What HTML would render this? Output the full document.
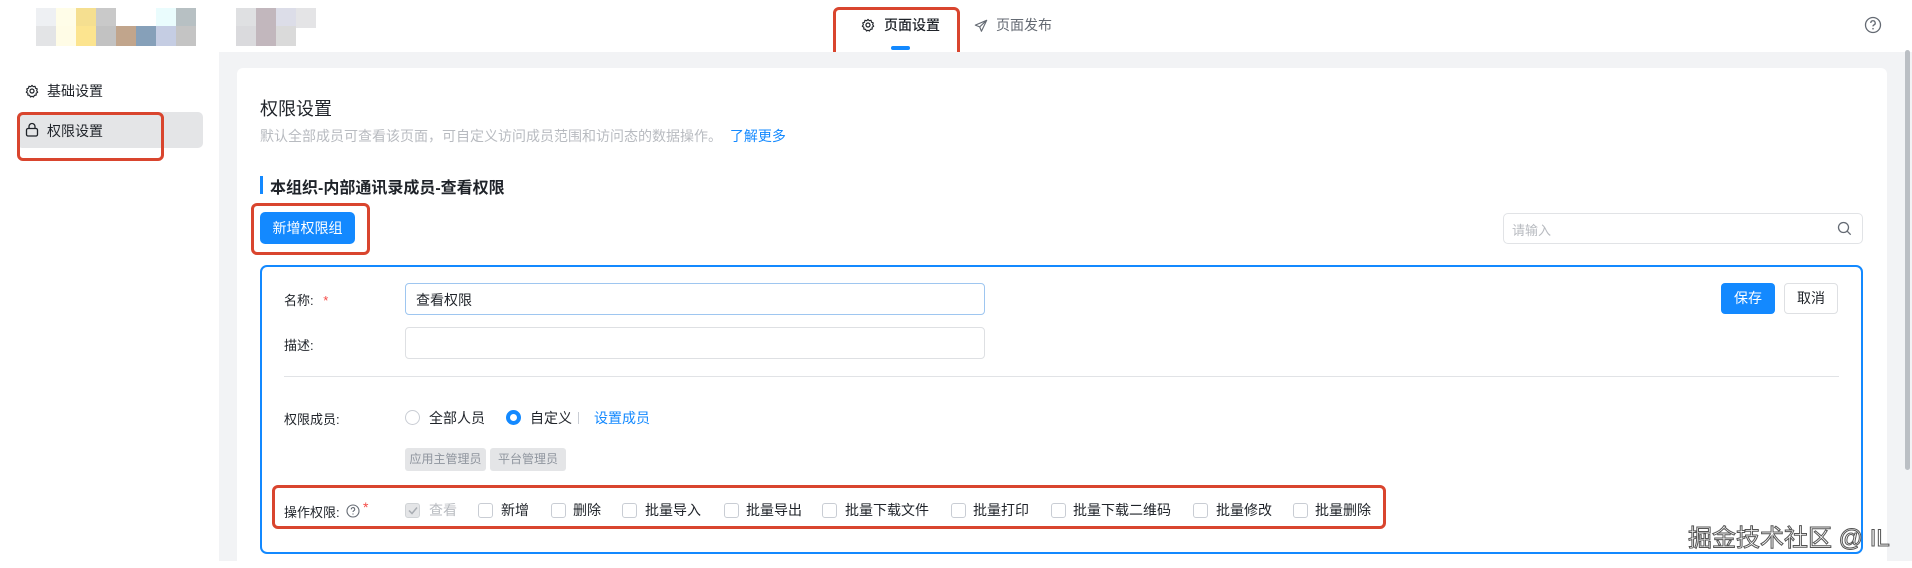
<!DOCTYPE html>
<html><head><meta charset="utf-8"><style>
*{margin:0;padding:0;box-sizing:border-box}
body{width:1912px;height:561px;overflow:hidden;background:#fff;font-family:"Liberation Sans","Noto Sans CJK SC",sans-serif;font-size:14px;color:#1f2329;position:relative}
.a{position:absolute}
.blk{position:absolute;width:20px;height:20px}
.red{position:absolute;border:3px solid #d9452e;border-radius:6px}
.cb{position:absolute;top:503px;width:15px;height:15px;border:1px solid #c9cdd4;border-radius:3px;background:#fff}
.cl{position:absolute;top:500px;font-size:14px;color:#1f2329;white-space:nowrap}
.lbl{position:absolute;left:284px;font-size:13px;color:#1f2329}
.inp{position:absolute;left:405px;width:580px;height:32px;border:1px solid #dee0e3;border-radius:4px;background:#fff}
</style></head><body>
<div class="blk" style="left:36px;top:8px;background:#eef0f3"></div>
<div class="blk" style="left:56px;top:8px;background:#fffde8"></div>
<div class="blk" style="left:76px;top:8px;background:#f5df90"></div>
<div class="blk" style="left:96px;top:8px;background:#c9c9c9"></div>
<div class="blk" style="left:156px;top:8px;background:#eafcfd"></div>
<div class="blk" style="left:176px;top:8px;background:#b7c0c3"></div>
<div class="blk" style="left:36px;top:26px;background:#e3e4e6"></div>
<div class="blk" style="left:56px;top:26px;background:#fffce6"></div>
<div class="blk" style="left:76px;top:26px;background:#fce48f"></div>
<div class="blk" style="left:96px;top:26px;background:#c2c2c2"></div>
<div class="blk" style="left:116px;top:26px;background:#c1a58c"></div>
<div class="blk" style="left:136px;top:26px;background:#86a0b9"></div>
<div class="blk" style="left:156px;top:26px;background:#c5cde3"></div>
<div class="blk" style="left:176px;top:26px;background:#c4c4c4"></div>
<div class="blk" style="left:236px;top:8px;background:#dfe0e2"></div>
<div class="blk" style="left:256px;top:8px;background:#c2b7bd"></div>
<div class="blk" style="left:276px;top:8px;background:#dcdde8"></div>
<div class="blk" style="left:296px;top:8px;background:#e4e4e6"></div>
<div class="blk" style="left:236px;top:26px;background:#dadadd"></div>
<div class="blk" style="left:256px;top:26px;background:#c2b7bd"></div>
<div class="blk" style="left:276px;top:26px;background:#dadada"></div>

<svg class="a" style="left:861px;top:18px" width="14" height="14" viewBox="0 0 16 16"><circle cx="8" cy="8" r="2.3" fill="none" stroke="#1f2329" stroke-width="1.4"/><path d="M8 1.5l1.4 1.6 2.1-.4.5 2.1 2 .8-.7 2 1.2 1.8-1.8 1.2.1 2.1-2.1.3-1 1.9L8 14l-1.7.9-1-1.9-2.1-.3.1-2.1L1.5 9.4l1.2-1.8-.7-2 2-.8.5-2.1 2.1.4z" fill="none" stroke="#1f2329" stroke-width="1.3" stroke-linejoin="round"/></svg>
<div class="a" style="left:884px;top:15px;font-size:14px;font-weight:500">页面设置</div>
<div class="a" style="left:891px;top:46px;width:19px;height:4px;border-radius:2px;background:#1389ff"></div>
<svg class="a" style="left:974px;top:19px" width="14" height="14" viewBox="0 0 16 16"><path d="M14.5 1.5L1.5 7l5 2 2 5z M6.5 9l8-7.5" fill="none" stroke="#646a73" stroke-width="1.3" stroke-linejoin="round"/></svg>
<div class="a" style="left:996px;top:15px;font-size:14px;color:#646a73">页面发布</div>
<svg class="a" style="left:1864px;top:16px" width="18" height="18" viewBox="0 0 18 18"><circle cx="9" cy="9" r="7.5" fill="none" stroke="#646a73" stroke-width="1.3"/><path d="M6.8 7a2.2 2.2 0 1 1 3 2c-.6.3-.8.7-.8 1.4" fill="none" stroke="#646a73" stroke-width="1.3"/><circle cx="9" cy="12.7" r=".8" fill="#646a73"/></svg>
<div class="red" style="left:833px;top:7px;width:127px;height:61px"></div>

<div class="a" style="left:219px;top:52px;width:1693px;height:509px;background:#f2f3f5"></div>
<div class="a" style="left:1905px;top:50px;width:5px;height:420px;background:#bbbfc4;border-radius:3px"></div>
<div class="a" style="left:237px;top:68px;width:1650px;height:500px;background:#fff;border-radius:6px"></div>

<svg class="a" style="left:25px;top:84px" width="14" height="14" viewBox="0 0 16 16"><circle cx="8" cy="8" r="2.3" fill="none" stroke="#1f2329" stroke-width="1.4"/><path d="M8 1.5l1.4 1.6 2.1-.4.5 2.1 2 .8-.7 2 1.2 1.8-1.8 1.2.1 2.1-2.1.3-1 1.9L8 14l-1.7.9-1-1.9-2.1-.3.1-2.1L1.5 9.4l1.2-1.8-.7-2 2-.8.5-2.1 2.1.4z" fill="none" stroke="#1f2329" stroke-width="1.3" stroke-linejoin="round"/></svg>
<div class="a" style="left:47px;top:81px;font-size:14px">基础设置</div>
<div class="a" style="left:17px;top:112px;width:186px;height:36px;background:#e4e5e7;border-radius:5px"></div>
<svg class="a" style="left:25px;top:122px" width="14" height="15" viewBox="0 0 14 15"><rect x="1.5" y="6.5" width="11" height="7.5" rx="1.5" fill="none" stroke="#1f2329" stroke-width="1.3"/><path d="M4 6.5V4.5a3 3 0 0 1 6 0v2" fill="none" stroke="#1f2329" stroke-width="1.3"/></svg>
<div class="a" style="left:47px;top:121px;font-size:14px">权限设置</div>
<div class="red" style="left:17px;top:112px;width:147px;height:49px"></div>

<div class="a" style="left:260px;top:95px;font-size:18px">权限设置</div>
<div class="a" style="left:260px;top:126px;font-size:14px;color:#b8bbc0;white-space:nowrap">默认全部成员可查看该页面，可自定义访问成员范围和访问态的数据操作。 <span style="color:#1389ff;margin-left:4px">了解更多</span></div>
<div class="a" style="left:260px;top:176px;width:3px;height:18px;background:#1389ff"></div>
<div class="a" style="left:270px;top:174px;font-size:16px;font-weight:bold">本组织-内部通讯录成员-查看权限</div>
<div class="a" style="left:260px;top:212px;width:95px;height:32px;background:#1389ff;border-radius:5px;color:#fff;font-size:14px;line-height:32px;text-align:center">新增权限组</div>
<div class="red" style="left:251px;top:203px;width:119px;height:52px"></div>
<div class="a" style="left:1503px;top:213px;width:360px;height:31px;border:1px solid #e1e3e6;border-radius:5px"></div>
<div class="a" style="left:1512px;top:220px;font-size:13px;color:#b8bbc0">请输入</div>
<svg class="a" style="left:1837px;top:221px" width="15" height="15" viewBox="0 0 15 15"><circle cx="6.5" cy="6.5" r="5" fill="none" stroke="#646a73" stroke-width="1.3"/><path d="M10.2 10.2l3.5 3.5" stroke="#646a73" stroke-width="1.3"/></svg>

<div class="a" style="left:260px;top:265px;width:1603px;height:289px;border:2px solid #1389ff;border-radius:7px"></div>
<div class="lbl" style="top:290px">名称: <span style="color:#f54a45;margin-left:6px">*</span></div>
<div class="inp" style="top:283px;border-color:#9ec6f0"></div>
<div class="a" style="left:416px;top:290px;font-size:14px">查看权限</div>
<div class="lbl" style="top:335px">描述:</div>
<div class="inp" style="top:327px"></div>
<div class="a" style="left:1721px;top:283px;width:54px;height:31px;background:#1389ff;border-radius:4px;color:#fff;line-height:31px;text-align:center">保存</div>
<div class="a" style="left:1784px;top:283px;width:54px;height:31px;border:1px solid #dee0e3;border-radius:4px;line-height:29px;text-align:center">取消</div>
<div class="a" style="left:284px;top:376px;width:1555px;height:1px;background:#e1e3e6"></div>

<div class="lbl" style="top:409px">权限成员:</div>
<div class="a" style="left:405px;top:410px;width:15px;height:15px;border:1px solid #c9cdd4;border-radius:50%"></div>
<div class="a" style="left:429px;top:408px">全部人员</div>
<div class="a" style="left:506px;top:410px;width:15px;height:15px;border:4px solid #1389ff;border-radius:50%"></div>
<div class="a" style="left:530px;top:408px">自定义</div>
<div class="a" style="left:578px;top:412px;width:1px;height:12px;background:#c9cdd4"></div>
<div class="a" style="left:594px;top:408px;color:#1389ff">设置成员</div>
<div class="a" style="left:405px;top:448px;width:81px;height:23px;background:#e4e5e7;border-radius:3px;font-size:12px;color:#8f959e;line-height:23px;text-align:center">应用主管理员</div>
<div class="a" style="left:490px;top:448px;width:76px;height:23px;background:#e4e5e7;border-radius:3px;font-size:12px;color:#8f959e;line-height:23px;text-align:center">平台管理员</div>

<div class="lbl" style="top:502px">操作权限:</div>
<svg class="a" style="left:346px;top:504px" width="14" height="14" viewBox="0 0 14 14"><circle cx="7" cy="7" r="6" fill="none" stroke="#646a73" stroke-width="1.1"/><path d="M5.3 5.4a1.7 1.7 0 1 1 2.3 1.5c-.4.2-.6.5-.6 1.1" fill="none" stroke="#646a73" stroke-width="1.1"/><circle cx="7" cy="10" r=".6" fill="#646a73"/></svg>
<div class="a" style="left:363px;top:499px;color:#f54a45">*</div>
<div class="cb" style="left:405px;background:#e4e5e7;border-color:#d0d3d6"></div>
<svg class="a" style="left:408px;top:506px" width="10" height="9" viewBox="0 0 10 9"><path d="M1 4.5l3 3 5-6" fill="none" stroke="#a8acb2" stroke-width="1.5"/></svg>
<div class="cl" style="left:429px;color:#b8bbc0">查看</div>
<div class="cb" style="left:478px"></div><div class="cl" style="left:501px">新增</div>
<div class="cb" style="left:551px"></div><div class="cl" style="left:573px">删除</div>
<div class="cb" style="left:622px"></div><div class="cl" style="left:645px">批量导入</div>
<div class="cb" style="left:724px"></div><div class="cl" style="left:746px">批量导出</div>
<div class="cb" style="left:822px"></div><div class="cl" style="left:845px">批量下载文件</div>
<div class="cb" style="left:951px"></div><div class="cl" style="left:973px">批量打印</div>
<div class="cb" style="left:1051px"></div><div class="cl" style="left:1073px">批量下载二维码</div>
<div class="cb" style="left:1193px"></div><div class="cl" style="left:1216px">批量修改</div>
<div class="cb" style="left:1293px"></div><div class="cl" style="left:1315px">批量删除</div>
<div class="red" style="left:272px;top:485px;width:1114px;height:44px"></div>

<div class="a" style="left:1688px;top:518px;font-size:24px;color:#fff;-webkit-text-stroke:1px #555;white-space:nowrap">掘金技术社区 @ IL</div>
</body></html>
